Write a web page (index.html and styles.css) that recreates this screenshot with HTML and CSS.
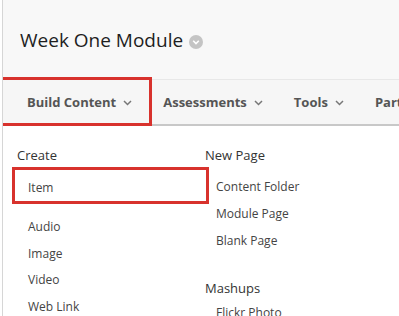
FILE: index.html
```html
<!DOCTYPE html>
<html>
<head>
<meta charset="utf-8">
<link rel="stylesheet" href="styles.css">
</head>
<body>
<div class="page">
  <header class="header">
    <h1 class="title">Week One Module</h1>
    <span class="title-icon"><svg width="14" height="14" viewBox="0 0 14 14"><circle cx="7" cy="7" r="7" fill="#c4c4c4"/><path d="M4.2 5.8 L7 8.6 L9.8 5.8" fill="none" stroke="#fff" stroke-width="1.6"/></svg></span>
  </header>
  <nav class="nav">
    <div class="nav-item">Build Content <span class="chev"><svg width="9" height="6" viewBox="0 0 9 6"><path d="M1 1 L4.5 4.5 L8 1" fill="none" stroke="#777" stroke-width="1.5"/></svg></span></div>
    <div class="nav-item">Assessments <span class="chev"><svg width="9" height="6" viewBox="0 0 9 6"><path d="M1 1 L4.5 4.5 L8 1" fill="none" stroke="#777" stroke-width="1.5"/></svg></span></div>
    <div class="nav-item">Tools <span class="chev"><svg width="9" height="6" viewBox="0 0 9 6"><path d="M1 1 L4.5 4.5 L8 1" fill="none" stroke="#777" stroke-width="1.5"/></svg></span></div>
    <div class="nav-item">Partner Content <span class="chev"><svg width="9" height="6" viewBox="0 0 9 6"><path d="M1 1 L4.5 4.5 L8 1" fill="none" stroke="#777" stroke-width="1.5"/></svg></span></div>
    <div class="mark mark-nav"></div>
  </nav>
  <section class="menu">
    <div class="col col-left">
      <h2 class="col-head">Create</h2>
      <ul class="list list-left">
        <li class="item item-hl">Item</li>
        <li class="item">Audio</li>
        <li class="item">Image</li>
        <li class="item">Video</li>
        <li class="item">Web Link</li>
      </ul>
    </div>
    <div class="col col-right">
      <h2 class="col-head">New Page</h2>
      <ul class="list list-right">
        <li class="item">Content Folder</li>
        <li class="item">Module Page</li>
        <li class="item">Blank Page</li>
      </ul>
      <h2 class="col-head col-head-2">Mashups</h2>
      <ul class="list list-mash">
        <li class="item">Flickr Photo</li>
      </ul>
    </div>
    <div class="mark mark-item"></div>
  </section>
</div>
</body>
</html>
```
FILE: styles.css
```css
html, body {
  margin: 0;
  padding: 0;
  background: #fff;
  overflow: hidden;
}
body {
  font-family: "Open Sans", "Liberation Sans", sans-serif;
  width: 399px;
  height: 316px;
}
.page {
  margin-left: 2px;
  border-left: 1px solid #d6d6d6;
  height: 316px;
  position: relative;
  overflow: hidden;
}
.header {
  height: 79px;
  background: #f8f8f8;
  display: flex;
  align-items: center;
  padding-left: 17px;
  box-sizing: border-box;
  padding-top: 1px;
}
.title {
  margin: 0;
  font-size: 19px;
  font-weight: 400;
  color: #1e1e1e;
}
.title-icon {
  display: flex;
  margin-left: 6px;
  margin-top: 3px;
}
.nav {
  position: relative;
  height: 44px;
  background: #f6f6f6;
  border-top: 1px solid #e8e8e8;
  border-bottom: 2px solid #c8c8c8;
  display: flex;
  align-items: center;
  padding-left: 24px;
  white-space: nowrap;
}
.nav-item {
  font-size: 13px;
  font-weight: 700;
  color: #555;
  display: flex;
  align-items: center;
  margin-right: 31px;
  flex-shrink: 0;
}
.chev {
  display: flex;
  margin-left: 7px;
  margin-top: 1px;
}
.mark {
  position: absolute;
  border: 3px solid #d8322d;
  box-sizing: border-box;
}
.mark-nav {
  left: -3px;
  top: -3px;
  width: 152px;
  height: 49px;
}
.menu {
  position: relative;
  display: flex;
  padding-top: 20px;
}
.col-left {
  width: 188px;
  padding-left: 14px;
  flex-shrink: 0;
}
.col-head {
  margin: 0;
  font-size: 13px;
  font-weight: 400;
  color: #333;
  line-height: 18px;
}
.col-head-2 {
  margin-top: 29px;
}
.list {
  list-style: none;
  margin: 0;
  padding: 0;
}
.list-left {
  padding-top: 9px;
}
.list-right {
  padding-top: 14px;
}
.list-mash {
  padding-top: 7px;
}
.item {
  font-size: 12px;
  color: #444;
  line-height: 18px;
  padding: 0 0 0 11px;
  margin-bottom: 9px;
}
.list-left .item {
  margin-bottom: 8.7px;
}
.list-left .item-hl {
  padding-top: 6px;
  padding-bottom: 6px;
  margin-bottom: 15px;
}
.mark-item {
  left: 9px;
  top: 41px;
  width: 197px;
  height: 37px;
}
```
